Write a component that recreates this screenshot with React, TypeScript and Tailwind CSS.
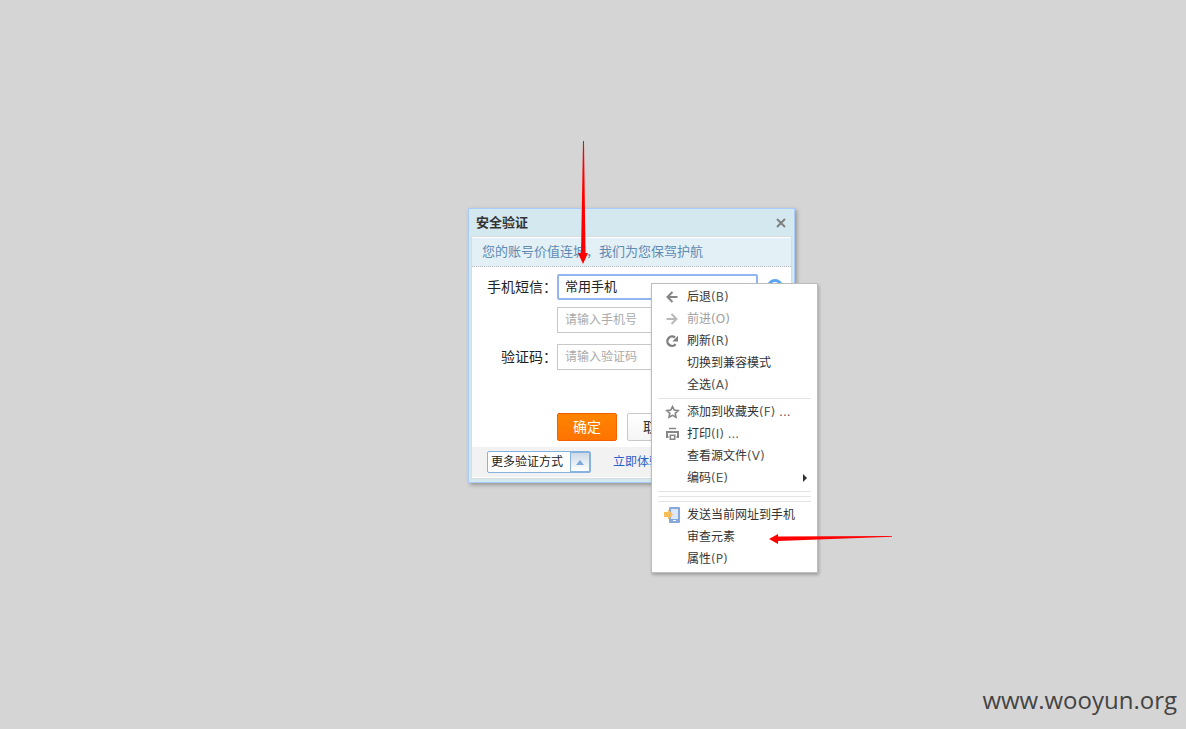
import type { ReactNode } from 'react';

const BackIcon = () => (
  <svg width="16" height="16" viewBox="0 0 16 16" fill="none" stroke="#858585" strokeWidth="2">
    <path d="M13.500 8H4M8.500 3L3.500 8l5 5" />
  </svg>
);

const ForwardIcon = () => (
  <svg width="16" height="16" viewBox="0 0 16 16" fill="none" stroke="#b8b8b8" strokeWidth="2">
    <path d="M2.500 8H12M7.500 3l5 5-5 5" />
  </svg>
);

const ReloadIcon = () => (
  <svg width="16" height="16" viewBox="0 0 16 16" fill="none">
    <path d="M11.600 11.300A4.700 4.700 0 1 1 11 4.500" stroke="#808080" strokeWidth="2.400" />
    <path d="M14 2.800v5.700H8.300z" fill="#808080" />
  </svg>
);

const StarIcon = () => (
  <svg width="16" height="16" viewBox="0 0 16 16" fill="none" stroke="#858585" strokeWidth="1.600">
    <path d="M8.500 2.500l1.700 3.600 3.900.5-2.900 2.700.8 4-3.500-2-3.500 2 .8-4L2.900 6.600l3.900-.5z" />
  </svg>
);

const PrintIcon = () => (
  <svg width="16" height="16" viewBox="0 0 16 16" fill="none" stroke="#858585">
    <path d="M5 2.500h7" strokeWidth="1.500" />
    <path d="M4.500 11H3V6h11v5h-1.500" strokeWidth="2" />
    <path d="M6.300 9.300h4.400v4H6.300z" strokeWidth="1.600" />
  </svg>
);

const PhoneIcon = () => (
  <svg width="18" height="18" viewBox="0 0 18 18">
    <rect x="6" y="1" width="11" height="16" rx="1" fill="#86a9da" />
    <rect x="8" y="3" width="7" height="10" fill="#dce8fa" />
    <rect x="10" y="14" width="3" height="1" fill="#fff" />
    <path d="M1 6h4V3.500l5 5-5 5V11H1z" fill="#f9bd57" />
  </svg>
);

type Item = { label: string; hint?: string; icon?: ReactNode; disabled?: boolean; submenu?: boolean };

const groups: Item[][] = [
  [
    { label: '后退', hint: '(B)', icon: <BackIcon /> },
    { label: '前进', hint: '(O)', icon: <ForwardIcon />, disabled: true },
    { label: '刷新', hint: '(R)', icon: <ReloadIcon /> },
    { label: '切换到兼容模式' },
    { label: '全选', hint: '(A)' },
  ],
  [
    { label: '添加到收藏夹', hint: '(F) ...', icon: <StarIcon /> },
    { label: '打印', hint: '(I) ...', icon: <PrintIcon /> },
    { label: '查看源文件', hint: '(V)' },
    { label: '编码', hint: '(E)', submenu: true },
  ],
  [],
  [],
  [
    { label: '发送当前网址到手机', icon: <PhoneIcon /> },
    { label: '审查元素' },
    { label: '属性', hint: '(P)' },
  ],
];

function ContextMenu() {
  return (
    <div
      role="menu"
      className="absolute top-[283px] left-[651px] flex w-[167px] flex-col border border-[#bdbdbd] bg-white py-[2px] font-['DejaVu_Sans','Noto_Sans_CJK_SC',sans-serif] text-[12px] shadow-[1px_2px_3px_rgba(0,0,0,0.25)]"
    >
      {groups.map((items, i) => (
        <div key={i} className="flex flex-col">
          {i > 0 && <hr className="mx-[6px] my-[2px] border-t border-[#e4e4e4]" />}
          {items.map((item) => (
            <button
              key={item.label}
              type="button"
              role="menuitem"
              disabled={item.disabled}
              className="group flex h-[22px] items-center pr-[10px] text-left leading-[22px] whitespace-nowrap text-[#333] disabled:text-[#a0a0a0]"
            >
              <span className="flex w-[35px] shrink-0 items-center justify-center pl-[4px]">{item.icon}</span>
              <span className="grow">
                {item.label}
                <span className="text-[#555] group-disabled:text-[#a0a0a0]">{item.hint}</span>
              </span>
              {item.submenu && (
                <svg width="4" height="8" viewBox="0 0 4 8" fill="#303030">
                  <path d="M0 0l4 4-4 4z" />
                </svg>
              )}
            </button>
          ))}
        </div>
      ))}
    </div>
  );
}

const rowLabel = 'w-[85px] shrink-0 text-right text-[14px] text-[#222]';
const textBox =
  'h-[26px] w-[200px] border border-[#c8c8c8] bg-white px-[7px] text-[12px] text-[#333] outline-none placeholder:text-[#aaa]';

function SecurityDialog() {
  return (
    <div
      role="dialog"
      aria-labelledby="dialog-title"
      className="absolute top-[208px] left-[468px] w-[327px] border border-[#aaccfb] bg-[#d3e8ef] px-[2px] pb-[3px] shadow-[2px_2px_4px_rgba(0,0,0,0.3)]"
    >
      <header className="flex h-[27px] items-center justify-between pr-[6px] pl-[5px]">
        <h1 id="dialog-title" className="text-[13px] font-bold text-[#333]">安全验证</h1>
        <button type="button" aria-label="关闭">
          <svg width="10" height="10" viewBox="0 0 10 10" stroke="#808080" strokeWidth="2">
            <path d="M1 1l8 8M9 1l-8 8" />
          </svg>
        </button>
      </header>
      <div className="border border-[#d8dcdd] bg-white pt-px">
        <p className="h-[29px] border-b border-dotted border-[#b8bcc0] bg-[#e3f0f6] pl-[10px] text-[13px] leading-[27px] text-[#5f8bb3]">
          您的账号价值连城，我们为您保驾护航
        </p>
        <form className="flex flex-col pt-[7px]">
          <div className="flex h-[26px] items-center">
            <label htmlFor="phone" className={rowLabel}>手机短信：</label>
            <select
              id="phone"
              className="h-[26px] w-[201px] appearance-none rounded-[2px] border-2 border-[#93b5f1] bg-white pl-[6px] text-[13px] text-[#222] outline-none"
            >
              <option>常用手机</option>
            </select>
            <button type="button" aria-label="帮助" className="ml-[9px]">
              <svg width="16" height="16" viewBox="0 0 16 16" fill="none" stroke="#5aa5f5" strokeWidth="3">
                <circle cx="8" cy="8" r="6.500" />
                <path d="M8 4v5M8 10.500v1.500" />
              </svg>
            </button>
          </div>
          <input aria-label="手机号" placeholder="请输入手机号" className={`mt-[7px] ml-[85px] ${textBox}`} />
          <div className="mt-[11px] flex h-[26px] items-center">
            <label htmlFor="code" className={rowLabel}>验证码：</label>
            <input id="code" placeholder="请输入验证码" className={textBox} />
          </div>
          <div className="mt-[43px] ml-[85px] flex gap-[10px] text-[14px]">
            <button
              type="submit"
              className="h-[28px] w-[60px] rounded-[2px] border border-[#f26000] bg-linear-to-b from-[#ff8400] to-[#ff7300] text-white"
            >
              确定
            </button>
            <button
              type="button"
              className="h-[28px] w-[60px] rounded-[2px] border border-[#c8c8c8] bg-linear-to-b from-white to-[#f5f5f5] text-[#333]"
            >
              取消
            </button>
          </div>
        </form>
        <footer className="mt-[6px] mb-px flex h-[30px] items-center bg-[#f2f2f2] pl-[15px] text-[12px]">
          <button
            type="button"
            className="flex h-[22px] w-[104px] items-stretch rounded-[2px] border border-[#86b2df] bg-white text-[#222]"
          >
            <span className="grow pl-[3px] text-left leading-[20px] whitespace-nowrap">更多验证方式</span>
            <span className="flex w-[20px] items-center justify-center border border-[#86b2df] bg-linear-to-b from-[#ccd9e6] to-white">
              <svg width="8" height="5" viewBox="0 0 8 5" fill="#7da9d8">
                <path d="M4 0l4 5H0z" />
              </svg>
            </span>
          </button>
          <a href="#" className="ml-[22px] text-[#2a5fc8]">立即体验</a>
        </footer>
      </div>
    </div>
  );
}

export default function App() {
  return (
    <main className="relative flex min-h-screen items-end justify-end overflow-hidden bg-[#d5d5d5] font-['Liberation_Sans','Noto_Sans_CJK_SC',sans-serif]">
      <SecurityDialog />
      <ContextMenu />
      <svg className="absolute top-[140px] left-[576px]" width="14" height="126" viewBox="0 0 14 126" fill="#f00">
        <path d="M7 1h1l1.500 112H12l-5 11-5-11h3z" />
      </svg>
      <svg className="absolute top-[532px] left-[768px]" width="126" height="14" viewBox="0 0 126 14" fill="#f00">
        <path d="M1 7l9-5v2.500L124 4v.800L10 9v3z" />
      </svg>
      <p className="pr-[9px] pb-[12px] font-['Open_Sans','Noto_Sans',sans-serif] text-[24px] leading-[34px] text-[#444]">
        www.wooyun.org
      </p>
    </main>
  );
}
